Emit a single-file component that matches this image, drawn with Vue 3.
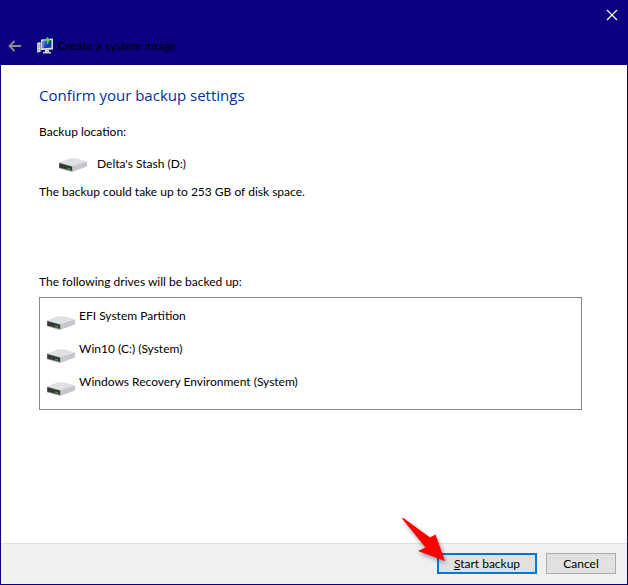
<script setup>
import { h } from 'vue'

const drives = [
  'EFI System Partition',
  'Win10 (C:) (System)',
  'Windows Recovery Environment (System)',
]

const DriveIcon = () =>
  h('svg', { width: 30, height: 16, viewBox: '0 0 30 16', 'aria-hidden': 'true' }, [
    h('path', { d: 'M1 6.6 L12 2.2 H18 L29 5.6 L14.5 10.4 Z', fill: '#dfe0e2' }),
    h('path', { d: 'M14 10.2 L29 5.6 V10.6 L14 16 Z', fill: '#c6c7ca' }),
    h('path', { d: 'M1 6.6 L14.5 10.3 V16 L1 12.2 Z', fill: '#98989a' }),
    h('path', { d: 'M1.3 7.3 L14 10.8 V14.8 L1.3 11.6 Z', fill: '#343637' }),
    h('path', { d: 'M9.2 11.4 L12.2 12.2 V13.8 L9.2 13 Z', fill: '#2fa043' }),
  ])
</script>

<template>
  <div class="window">
    <header class="titlebar">
      <button class="close" type="button" aria-label="Close">
        <svg width="12" height="12" viewBox="0 0 12 12">
          <path d="M1 1 L11 11 M11 1 L1 11" stroke="#fff" stroke-width="1.3" fill="none" />
        </svg>
      </button>
      <div class="caption">
        <button class="back" type="button" aria-label="Back">
          <svg width="14" height="12" viewBox="0 0 14 12">
            <path d="M6.5 1 L1.5 6 L6.5 11 M1.5 6 H13" stroke="#8d8d91" stroke-width="1.8" fill="none" />
          </svg>
        </button>
        <svg class="app-icon" width="18" height="18" viewBox="0 0 18 18" aria-hidden="true">
          <path d="M1 6 L4 5 V15 L1 15.5 Z" fill="#d5d9da" />
          <path d="M4 5 L5 5.5 V15 L4 15 Z" fill="#8c989f" />
          <path d="M1.5 8 H3.5 M1.5 10 H3.5" stroke="#8a969b" />
          <path d="M1.5 13 H3" stroke="#52c93c" stroke-width="1.5" />
          <path d="M5 2.5 L17 1.5 V12.5 L5 13 Z" fill="#d8dee1" />
          <path d="M6.5 4 L15.5 3 V10.8 L6.5 11.3 Z" fill="#1739bd" />
          <path d="M6.5 4 L10 3.6 L8 11 H6.5 Z" fill="#4e79df" />
          <path d="M9 12.5 H13 V14.5 L15 15 V16.5 H7 V15 L9 14.5 Z" fill="#cbd0d2" />
          <path d="M8 3.5 L11.5 0 L15 3.5 H13 Q13 7 10.5 8.2 Q11 6 10.5 3.5 Z" fill="#56d343" />
        </svg>
        <span>Create a system image</span>
      </div>
    </header>

    <main class="content">
      <h1>Confirm your backup settings</h1>
      <p class="label">Backup location:</p>
      <div class="location">
        <DriveIcon />
        <span>Delta's Stash (D:)</span>
      </div>
      <p class="estimate">The backup could take up to 253 GB of disk space.</p>
      <p class="label">The following drives will be backed up:</p>
      <ul class="drives">
        <li v-for="drive in drives" :key="drive">
          <DriveIcon />
          <span>{{ drive }}</span>
        </li>
      </ul>
    </main>

    <footer class="actions">
      <div class="primary">
        <button class="button default" type="button"><u>S</u>tart backup</button>
        <svg class="pointer" width="56" height="56" viewBox="0 0 56 56" aria-hidden="true">
          <path d="M5 5.5 Q5.5 4.6 7 5.5 L33 24.5 L38.5 21.5 L48 48 L21 38 L28.5 34.5 Z" fill="#ff0000" />
        </svg>
      </div>
      <button class="button" type="button">Cancel</button>
    </footer>
  </div>
</template>

<style>
body {
  margin: 0;
}
</style>

<style scoped>
.window {
  box-sizing: border-box;
  min-height: 100vh;
  display: flex;
  flex-direction: column;
  border: 1px solid #0a0080;
  background: #fff;
  color: #000;
  font: 12px/16px Lato, "Open Sans", sans-serif;
}

.titlebar {
  display: flex;
  flex-direction: column;
  height: 64px;
  background: #0a0080;
}

.close,
.back {
  display: flex;
  align-items: center;
  justify-content: center;
  border: 0;
  padding: 0;
  background: none;
}

.close {
  align-self: flex-end;
  width: 30px;
  height: 28px;
}

.caption {
  display: flex;
  align-items: center;
  height: 33px;
  padding-left: 7px;
}

.app-icon {
  margin: 0 4px 0 14px;
}

.content {
  flex: 1;
  padding: 18px 45px 24px 38px;
}

h1,
p,
ul {
  margin: 0;
  padding: 0;
}

h1 {
  margin-bottom: 17px;
  color: #003399;
  font-family: "Open Sans", "Noto Sans", sans-serif;
  font-size: 15px;
  font-weight: 400;
  line-height: 24px;
}

.location {
  display: flex;
  align-items: center;
  gap: 9px;
  margin: 16px 0 12px 19px;
}

.estimate {
  margin-bottom: 74px;
}

.drives {
  margin-top: 7px;
  padding: 10px 6px 2px;
  border: 1px solid #828790;
  list-style: none;
}

.drives li {
  display: flex;
  height: 33px;
  gap: 3px;
}

.drives svg {
  margin-top: 6px;
}

.actions {
  display: flex;
  justify-content: flex-end;
  gap: 9px;
  padding: 9px 11px 10px;
  border-top: 1px solid #dfdfdf;
  background: #f0f0f0;
}

.primary {
  position: relative;
}

.button {
  box-sizing: border-box;
  min-width: 70px;
  height: 21px;
  padding: 0;
  border: 1px solid #adadad;
  background: #e1e1e1;
  color: #000;
  font: inherit;
  line-height: 16px;
}

.default {
  width: 100px;
  border: 2px solid #0078d7;
}

.pointer {
  position: absolute;
  left: -40px;
  top: -40px;
  filter: drop-shadow(1px 2px 2px #00000066);
  pointer-events: none;
}
</style>
